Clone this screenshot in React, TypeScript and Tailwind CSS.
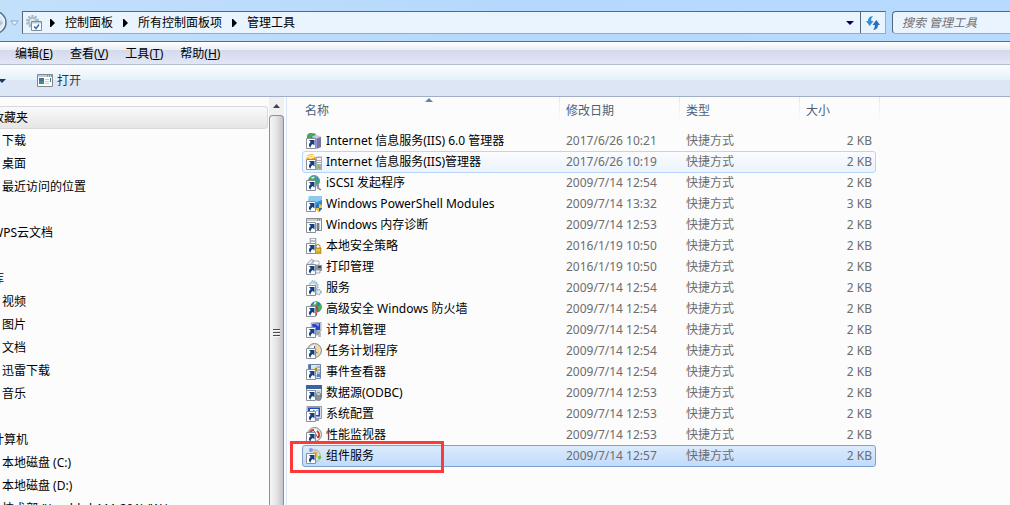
import type { ReactNode } from 'react';
import clsx from 'clsx';

type Tool = {
    name: string;
    date: string;
    size: string;
    icon: ReactNode;
    state?: 'hover' | 'selected';
};

const gear = 'M8 0l1 2 2-1 .5 2 2-.2-.2 2.2 2 .7-1.2 1.8 1.4 1.5-2 1 .5 2-2.2.1-.6 2-2-1-1.2 1.6-1.4-1.6-2 1-.6-2-2-.1.4-2.2-2-.8 1.2-1.8L2.600 6.500l2-.8-.2-2.200 2 .2L7 1.600z';

const globe = (
    <>
        <circle cx="8" cy="6" r="5.500" fill="#3f8ed2" stroke="#6c8fa8" />
        <path d="M4 3l3-2 3 1-1 3-3 1-2 2zM10 6l3-1-1 4-2 1z" fill="#3fae49" />
        <path d="M5 2.500l3-1 1 1-3 1.500z" fill="#d5f2d8" />
    </>
);

const iisOld = (
    <>
        <circle cx="5" cy="4" r="4" fill="#2f7fd0" />
        <path d="M1 4l2-3 3-1 2 2-3 2-2 2zM8 0l2 1-1 2-2-1z" fill="#3fb13f" />
        <path d="M6 3.500L10 2l5 2v10l-5 2-4-2z" fill="#9d99d2" />
        <path d="M6 3.500L10 2l5 2-4 1.500z" fill="#c9c8ea" />
        <path d="M11 5.500L15 4v10l-4 1.500z" fill="#77739f" />
    </>
);

const iisNew = (
    <>
        <circle cx="5" cy="4.500" r="4.500" fill="#f5a623" />
        <path d="M1 3l3-2 5 1-3 1.500zM1 6l7-3" stroke="#fff2b8" fill="#ffd65a" />
        <path d="M9 3.500l2-1h5V16H9z" fill="#a4acb3" />
        <path d="M11 4h4v2h-4zM11 7h4v1h-4zM11 9h4v1h-4z" fill="#f3f5f7" />
        <path d="M12 12h2v2h-2z" fill="#5ed233" />
    </>
);

const iscsi = (
    <>
        {globe}
        <path d="M10 10h2v3l3 2" stroke="#8d98a0" strokeWidth="2" fill="none" />
    </>
);

const powershell = (
    <>
        <path d="M3 0h13v12H2z" fill="#2d8fd6" />
        <path d="M3 0h13v4L6 8H2z" fill="#8cc9f0" />
        <path d="M10 9l3-1 3 1v4l-3 3-3-3z" fill="#2c6fc0" />
        <path d="M13 8l3 1v3h-3zM10 12h3v4l-3-3z" fill="#f5c432" />
    </>
);

const memory = (
    <>
        <path d="M.5 1.500h15v12H.5z" fill="#fafbfc" stroke="#858b91" />
        <path d="M1 2h14v2H1z" fill="#c9ced3" />
        <path d="M11 6h2v7h-2z" fill="#5b6268" />
        <path d="M10 7h4M10 9h4M10 11h4" stroke="#8f959a" />
        <path d="M11 3h1M13 3h1" stroke="#4f565c" />
    </>
);

const security = (
    <>
        <path d="M4 0h6v12H4z" fill="#b9c1c8" stroke="#7b858d" strokeWidth=".5" />
        <path d="M5 1h4v1H5zM5 4h4v1H5z" fill="#f7fafb" />
        <path d="M10 10V8.500a2 2 0 014 0V10" fill="none" stroke="#9c8234" />
        <path d="M9 10h6v5.500H9z" fill="#e1aa25" stroke="#9a7415" strokeWidth=".6" />
        <path d="M10 12h4" stroke="#f6d978" />
    </>
);

const printer = (
    <>
        <path d="M1 5l4-4.500 3 1L4 6z" fill="#e6e9eb" stroke="#7d858b" strokeWidth=".7" />
        <path d="M7 2h6v4H7z" fill="#fff" stroke="#878f95" strokeWidth=".7" />
        <path d="M5 6h11v6H5z" fill="#8d959b" />
        <path d="M12 7h3v2h-3z" fill="#3f474e" />
        <path d="M9 11h5v3H9z" fill="#eff2f4" stroke="#848c92" strokeWidth=".7" />
    </>
);

const services = (
    <>
        <path d={gear} fill="#b8d3e3" stroke="#7ea3ba" strokeWidth=".6" transform="scale(.82)" />
        <circle cx="6.500" cy="6.500" r="3" fill="#eef6fa" />
        <circle cx="12.500" cy="12" r="2.500" fill="#dcebf3" stroke="#88adc3" strokeDasharray="1.500 .8" strokeWidth="1.500" />
    </>
);

const firewall = (
    <>
        <circle cx="10" cy="6" r="5.800" fill="#2878cf" />
        <path d="M6 4l3-3 3 0-1 4-3 2zM12 5l3-2 .5 4-3 4z" fill="#4bb543" />
        <path d="M8 1.500l2-.7v2L8 4z" fill="#d7f0ff" />
        <path d="M0 6l11-1.500v10L0 16z" fill="#a9503c" />
        <path d="M2 6v-1M6 5v3M10 9v3" stroke="#e0b2a3" strokeWidth=".7" />
    </>
);

const computer = (
    <>
        <path d="M5 1l10-1v9l-9 1z" fill="#dfe4e8" stroke="#818b94" strokeWidth=".7" />
        <path d="M6 2l8-1v7l-7 1z" fill="#2743c9" />
        <path d="M9 2l4-.5v3z" fill="#8fa8f6" />
        <path d="M0 5h4v8H0z" fill="#c8cdd1" />
        <path d="M9 10l5-1 1 3-6 2z" fill="#9da5ab" />
        <path d="M12 13l3-1v3h-3z" fill="#b8bec3" />
    </>
);

const scheduler = (
    <>
        <circle cx="8.500" cy="7.500" r="7" fill="#d9d7cf" stroke="#8d8c86" />
        <circle cx="8.500" cy="7.500" r="5.200" fill="#fdfdfa" />
        <path d="M8.500 7.500V2.300a5.200 5.200 0 010 10.400z" fill="#f4d795" />
        <path d="M8.500 3v5l3 2" fill="none" stroke="#4f6584" />
    </>
);

const events = (
    <>
        <path d="M2.500.5h12v14h-12z" fill="#dbe6f4" stroke="#6d84a8" />
        <path d="M3 1h2v13H3z" fill="#4a6fae" />
        <path d="M11 3h3M11 6h3M11 9h3M9 12h5" stroke="#6988b8" />
        <path d="M6.500 8L10 2l3 6z" fill="#f6c62d" />
        <path d="M10 4v3" stroke="#594a12" />
        <path d="M11 10h3v3h-3z" fill="#5f7db2" />
    </>
);

const odbc = (
    <>
        <path d="M.5.500h15v12H.5z" fill="#f7f8f9" stroke="#7e8790" />
        <path d="M0 0h16v4H0z" fill="#3b64a5" />
        <path d="M1 5h14v2H1z" fill="#cfd5db" />
        <path d="M10 9c0-2 5-2 5 0v5c0 2-5 2-5 0z" fill="#8c949b" stroke="#5b646c" strokeWidth=".6" />
        <ellipse cx="12.500" cy="9" rx="2" ry=".8" fill="#e5e9ec" />
    </>
);

const config = (
    <>
        <path d="M1 .5h14.500v12H1z" fill="#d9dde0" stroke="#83898f" strokeWidth=".8" />
        <path d="M2 1.500h12v9H2z" fill="#2448c4" />
        <path d="M4 3h8.500v6H4z" fill="#fff" />
        <path d="M5 7l3-3 1 2 3-2" fill="none" stroke="#36a5c2" />
        <path d="M10 13h3v2h-3z" fill="#9aa1a7" />
    </>
);

const performance = (
    <>
        <circle cx="8.500" cy="7.500" r="7" fill="#e6e6e3" stroke="#898986" />
        <circle cx="8.500" cy="7.500" r="5.200" fill="#fff" />
        <path d="M4 5a5 5 0 014-2M11 4a5 5 0 011 7" fill="none" stroke="#d23030" strokeWidth="2" />
        <path d="M8 4l4 7" stroke="#4b4b4b" />
    </>
);

const component = (
    <>
        <path d="M5 2h5a6 6 0 014 7 6 6 0 01-4 5" fill="none" stroke="#b6bcc1" strokeWidth="1.500" />
        <circle cx="5" cy="2" r="2" fill="#8d95e6" />
        <path d="M5 6l4-3 3 2-1 4-5 1z" fill="#e3b53c" />
        <circle cx="13.500" cy="9.500" r="1.800" fill="#6cc13e" />
    </>
);

const tools: Tool[] = [
    { name: 'Internet 信息服务(IIS) 6.0 管理器', date: '2017/6/26 10:21', size: '2 KB', icon: iisOld },
    { name: 'Internet 信息服务(IIS)管理器', date: '2017/6/26 10:19', size: '2 KB', icon: iisNew, state: 'hover' },
    { name: 'iSCSI 发起程序', date: '2009/7/14 12:54', size: '2 KB', icon: iscsi },
    { name: 'Windows PowerShell Modules', date: '2009/7/14 13:32', size: '3 KB', icon: powershell },
    { name: 'Windows 内存诊断', date: '2009/7/14 12:53', size: '2 KB', icon: memory },
    { name: '本地安全策略', date: '2016/1/19 10:50', size: '2 KB', icon: security },
    { name: '打印管理', date: '2016/1/19 10:50', size: '2 KB', icon: printer },
    { name: '服务', date: '2009/7/14 12:54', size: '2 KB', icon: services },
    { name: '高级安全 Windows 防火墙', date: '2009/7/14 12:54', size: '2 KB', icon: firewall },
    { name: '计算机管理', date: '2009/7/14 12:54', size: '2 KB', icon: computer },
    { name: '任务计划程序', date: '2009/7/14 12:54', size: '2 KB', icon: scheduler },
    { name: '事件查看器', date: '2009/7/14 12:54', size: '2 KB', icon: events },
    { name: '数据源(ODBC)', date: '2009/7/14 12:53', size: '2 KB', icon: odbc },
    { name: '系统配置', date: '2009/7/14 12:53', size: '2 KB', icon: config },
    { name: '性能监视器', date: '2009/7/14 12:53', size: '2 KB', icon: performance },
    { name: '组件服务', date: '2009/7/14 12:57', size: '2 KB', icon: component, state: 'selected' },
];

const navGroups = [
    { title: '收藏夹', items: ['下载', '桌面', '最近访问的位置'] },
    { title: 'WPS云文档', items: [] },
    { title: '库', items: ['视频', '图片', '文档', '迅雷下载', '音乐'] },
    { title: '计算机', items: ['本地磁盘 (C:)', '本地磁盘 (D:)', '技术部 (\\\\webhd-111.201) (W:)'] },
];

const menus = [
    { label: '编辑', accel: 'E' },
    { label: '查看', accel: 'V' },
    { label: '工具', accel: 'T' },
    { label: '帮助', accel: 'H' },
];

function ShortcutIcon({ children }: { children: ReactNode }) {
    return (
        <svg viewBox="0 0 16 16" className="size-4 shrink-0" aria-hidden="true">
            {children}
            <path d="M.5 5.500h9v10h-9z" fill="#fff" stroke="#8b9096" />
            <path d="M3 7h5.500v5.500L6.700 10.900C5 12 4.600 13 4.700 14.500 2.500 13.500 2.300 11 4.700 8.900z" fill="#163f80" />
        </svg>
    );
}

function Crumb({ label }: { label: string }) {
    return (
        <>
            <svg viewBox="0 0 5 8" className="h-2 w-[5px]" aria-hidden="true">
                <path d="M0 0h1l4 4-4 4H0z" fill="#000" />
            </svg>
            <button type="button" className="px-[10px]">{label}</button>
        </>
    );
}

function AddressBar() {
    return (
        <header className="flex h-[41px] shrink-0 bg-linear-to-r from-[#c3e0fb] via-[#b5d8fc] to-[#b7dbff] pt-[11px]">
            <button type="button" aria-label="前进" className="h-6 w-[7px] overflow-hidden">
                <svg viewBox="0 0 7 24" className="h-6 w-[7px]">
                    <circle cx="-5" cy="11.500" r="11" fill="#dcebf8" stroke="#5f7388" strokeWidth="1.500" />
                    <circle cx="-5" cy="11.500" r="9.500" fill="none" stroke="#f5faff" />
                    <path d="M0 9l3 3-3 3" fill="#b5c6d6" />
                </svg>
            </button>
            <button type="button" aria-label="最近的页面" className="flex h-6 w-[15px] items-center justify-center">
                <svg viewBox="0 0 9 7" className="h-[7px] w-[9px]">
                    <path d="M.8 1h7.400L4.500 5.500z" fill="#e9f4ff" stroke="#8ca5bf" />
                </svg>
            </button>
            <div className="flex h-[23px] flex-1 items-center border border-[#9aabc0] border-t-[#56687c] border-l-[#56687c] bg-[#eaf4ff] pl-[3px]">
                <svg viewBox="0 0 16 16" className="mr-2 size-4" aria-hidden="true">
                    <circle cx="6.500" cy="6.500" r="5.500" fill="none" stroke="#9db6c8" strokeWidth="2" strokeDasharray="2 1.450" />
                    <circle cx="6.500" cy="6.500" r="3.800" fill="#dfeaf3" stroke="#a8c0d0" strokeWidth="2" />
                    <path d="M5.500 6.500h10v9h-10z" fill="#fff" stroke="#7f8b95" />
                    <path d="M6 7h9v1.500H6z" fill="#c0c9d0" />
                    <path d="M8 11.500l2 2 3-4" fill="none" stroke="#2574c4" strokeWidth="1.500" />
                </svg>
                <nav aria-label="地址" className="flex flex-1 items-center">
                    <Crumb label="控制面板" />
                    <Crumb label="所有控制面板项" />
                    <Crumb label="管理工具" />
                </nav>
                <button type="button" aria-label="以前的位置" className="flex h-full w-5 items-center justify-center">
                    <svg viewBox="0 0 8 4" className="h-1 w-2">
                        <path d="M0 0h8L4 4z" fill="#00005c" />
                    </svg>
                </button>
                <button type="button" aria-label="刷新" className="flex h-full w-[25px] items-center justify-center border-l border-[#56687c]">
                    <svg viewBox="0 0 14 14" className="size-[14px]">
                        <path d="M7 0C3.500.5 2 2 2 5H0l3.700 5L7.500 5H5.300C5 3 5.500 1.500 7 0z" fill="#2f8fd8" />
                        <path d="M7 14c3.500-.5 5-2 5-5h2L10.300 4 6.500 9h2.200c.3 2-.2 3.500-1.700 5z" fill="#2a6cc0" />
                    </svg>
                </button>
            </div>
            <input
                type="search"
                aria-label="搜索 管理工具"
                placeholder="搜索 管理工具"
                className="ml-[6px] h-[23px] w-[118px] rounded-l-sm border border-r-0 border-[#9aabc0] border-t-[#56687c] border-l-[#56687c] bg-[#eaf4ff] pl-[9px] italic placeholder:text-[#707070]"
            />
        </header>
    );
}

function Sidebar() {
    return (
        <div className="flex w-[287px] shrink-0 border-r border-[#d6e5f5]">
            <nav aria-label="导航窗格" className="flex-1 overflow-hidden pt-[9px]">
                {navGroups.map((group, i) => (
                    <section key={group.title} className="mb-[23px]">
                        <a
                            href="#"
                            className={clsx(
                                'flex h-[23px] items-center border-y',
                                i === 0
                                    ? 'rounded-r-sm border-r border-[#d9d9d9] bg-linear-to-b from-[#fafafa] to-[#e5e5e5]'
                                    : 'border-transparent',
                            )}
                        >
                            <span className="-ml-2">{group.title}</span>
                        </a>
                        {group.items.map((item) => (
                            <a key={item} href="#" className="flex h-[23px] items-center pl-[2px] whitespace-nowrap">
                                {item}
                            </a>
                        ))}
                    </section>
                ))}
            </nav>
            {/* Scrollbar */}
            <div className="mr-[2px] ml-px flex w-[15px] flex-col bg-[#f0f0f0]">
                <button type="button" aria-label="向上滚动" className="flex h-[18px] shrink-0 items-center justify-center">
                    <svg viewBox="0 0 7 4" className="h-1 w-[7px]">
                        <path d="M3.500 0L7 4H0z" fill="#3d4650" />
                    </svg>
                </button>
                <div className="flex flex-1 flex-col items-center justify-center rounded-t-sm border border-b-0 border-[#8f8f8f] bg-linear-to-r from-[#f6f6f6] via-[#e4e4e6] to-[#c3c4c8] pt-11">
                    <svg viewBox="0 0 7 9" className="h-[9px] w-[7px]" aria-hidden="true">
                        <path d="M0 1.500h7M0 4.500h7M0 7.500h7" stroke="#4c4c4c" />
                        <path d="M0 2.500h7M0 5.500h7M0 8.500h7" stroke="#f8f8f8" />
                    </svg>
                </div>
            </div>
        </div>
    );
}

const headCell =
    'flex items-center border-r border-transparent pt-[3px] font-normal [border-image:linear-gradient(#dde8f4,#fcfcfc)_1]';

function FileList() {
    return (
        <main className="min-w-0 flex-1 pl-[15px]">
            <table className="block w-[578px] text-left">
                <thead className="block text-[#4c607a]">
                    <tr className="relative grid h-[24px] grid-cols-[258px_120px_120px_80px]">
                        <th className={clsx(headCell, 'pl-[3px]')} aria-sort="ascending">
                            名称
                            <svg viewBox="0 0 8 4" className="absolute top-px left-[123px] h-1 w-2" aria-hidden="true">
                                <path d="M4 0l4 4H0z" fill="#5f87a8" />
                            </svg>
                        </th>
                        <th className={clsx(headCell, 'pl-[6px]')}>修改日期</th>
                        <th className={clsx(headCell, 'pl-[6px]')}>类型</th>
                        <th className={clsx(headCell, 'pl-[6px]')}>大小</th>
                    </tr>
                </thead>
                <tbody className="block w-[574px] pt-[9px] text-[#6d6d6d]">
                    {tools.map((tool) => (
                        <tr
                            key={tool.name}
                            className={clsx(
                                'relative -mb-px grid h-[22px] grid-cols-[257px_120px_120px_1fr] items-center rounded-[3px] border',
                                !tool.state && 'border-transparent',
                                tool.state === 'hover' && 'border-[#b8d6fb] bg-linear-to-b from-[#fbfcfe] to-[#ebf3fd]',
                                tool.state === 'selected' && 'border-[#7da2ce] bg-linear-to-b from-[#dcebfc] to-[#c1dbfc]',
                            )}
                        >
                            <td className="flex items-center gap-1 pl-[3px] whitespace-nowrap text-black">
                                <ShortcutIcon>{tool.icon}</ShortcutIcon>
                                {tool.name}
                            </td>
                            <td className="pl-[6px]">{tool.date}</td>
                            <td className="pl-[6px]">快捷方式</td>
                            <td className="pr-[3px] text-right">
                                {tool.size}
                                {tool.state === 'selected' && (
                                    <span className="absolute top-[-5px] left-[-13px] h-8 w-[154px] border-3 border-[#fb3b3b]" />
                                )}
                            </td>
                        </tr>
                    ))}
                </tbody>
            </table>
        </main>
    );
}

export default function App() {
    return (
        <div className="flex h-screen flex-col overflow-hidden bg-[#fcfcfc] font-['Noto_Sans','Noto_Sans_CJK_SC',sans-serif] text-[12px] leading-4 text-black">
            <AddressBar />

            <div className="flex h-6 shrink-0 items-center gap-[17px] border-t border-b border-t-[#5d6c7e] border-b-[#b3bdd0] bg-[linear-gradient(#ffffff,#e9edf6_36%,#d4daec_36%,#e1e7f6)] pt-[2px] pl-[15px]">
                {menus.map((menu) => (
                    <button key={menu.accel} type="button">
                        {menu.label}(<span className="underline">{menu.accel}</span>)
                    </button>
                ))}
            </div>

            <div className="flex h-8 shrink-0 items-center border-b border-[#a0afc6] bg-[linear-gradient(#fbfdff,#e6f1fb_48%,#dce6f4_48%,#dce7f5)] text-[#1e395b]">
                <button type="button" aria-label="组织" className="mr-[31px] flex h-full w-[6px] items-center">
                    <svg viewBox="2 0 6 4" className="h-1 w-[6px]">
                        <path d="M0 0h8L4 4z" fill="#1e395b" />
                    </svg>
                </button>
                <button type="button" className="flex items-center gap-1">
                    <svg viewBox="0 0 16 13" className="h-[13px] w-4" aria-hidden="true">
                        <path d="M.5.500h15v12H.5z" fill="#fff" stroke="#7e8890" />
                        <path d="M1 1h14v2H1z" fill="#c3cad0" />
                        <path d="M10 2h1M12 2h1M14 2h1" stroke="#59636b" />
                        <path d="M2 4h5v6H2z" fill="#3c8f86" />
                        <path d="M2 4h5v3H2z" fill="#42709e" />
                        <path d="M8 5.500h4M8 7.500h4M8 9.500h4" stroke="#c3cad0" />
                        <path d="M13.500 4v4" stroke="#3a7a86" />
                    </svg>
                    打开
                </button>
            </div>

            <div className="flex min-h-0 flex-1">
                <Sidebar />
                <FileList />
            </div>
        </div>
    );
}
